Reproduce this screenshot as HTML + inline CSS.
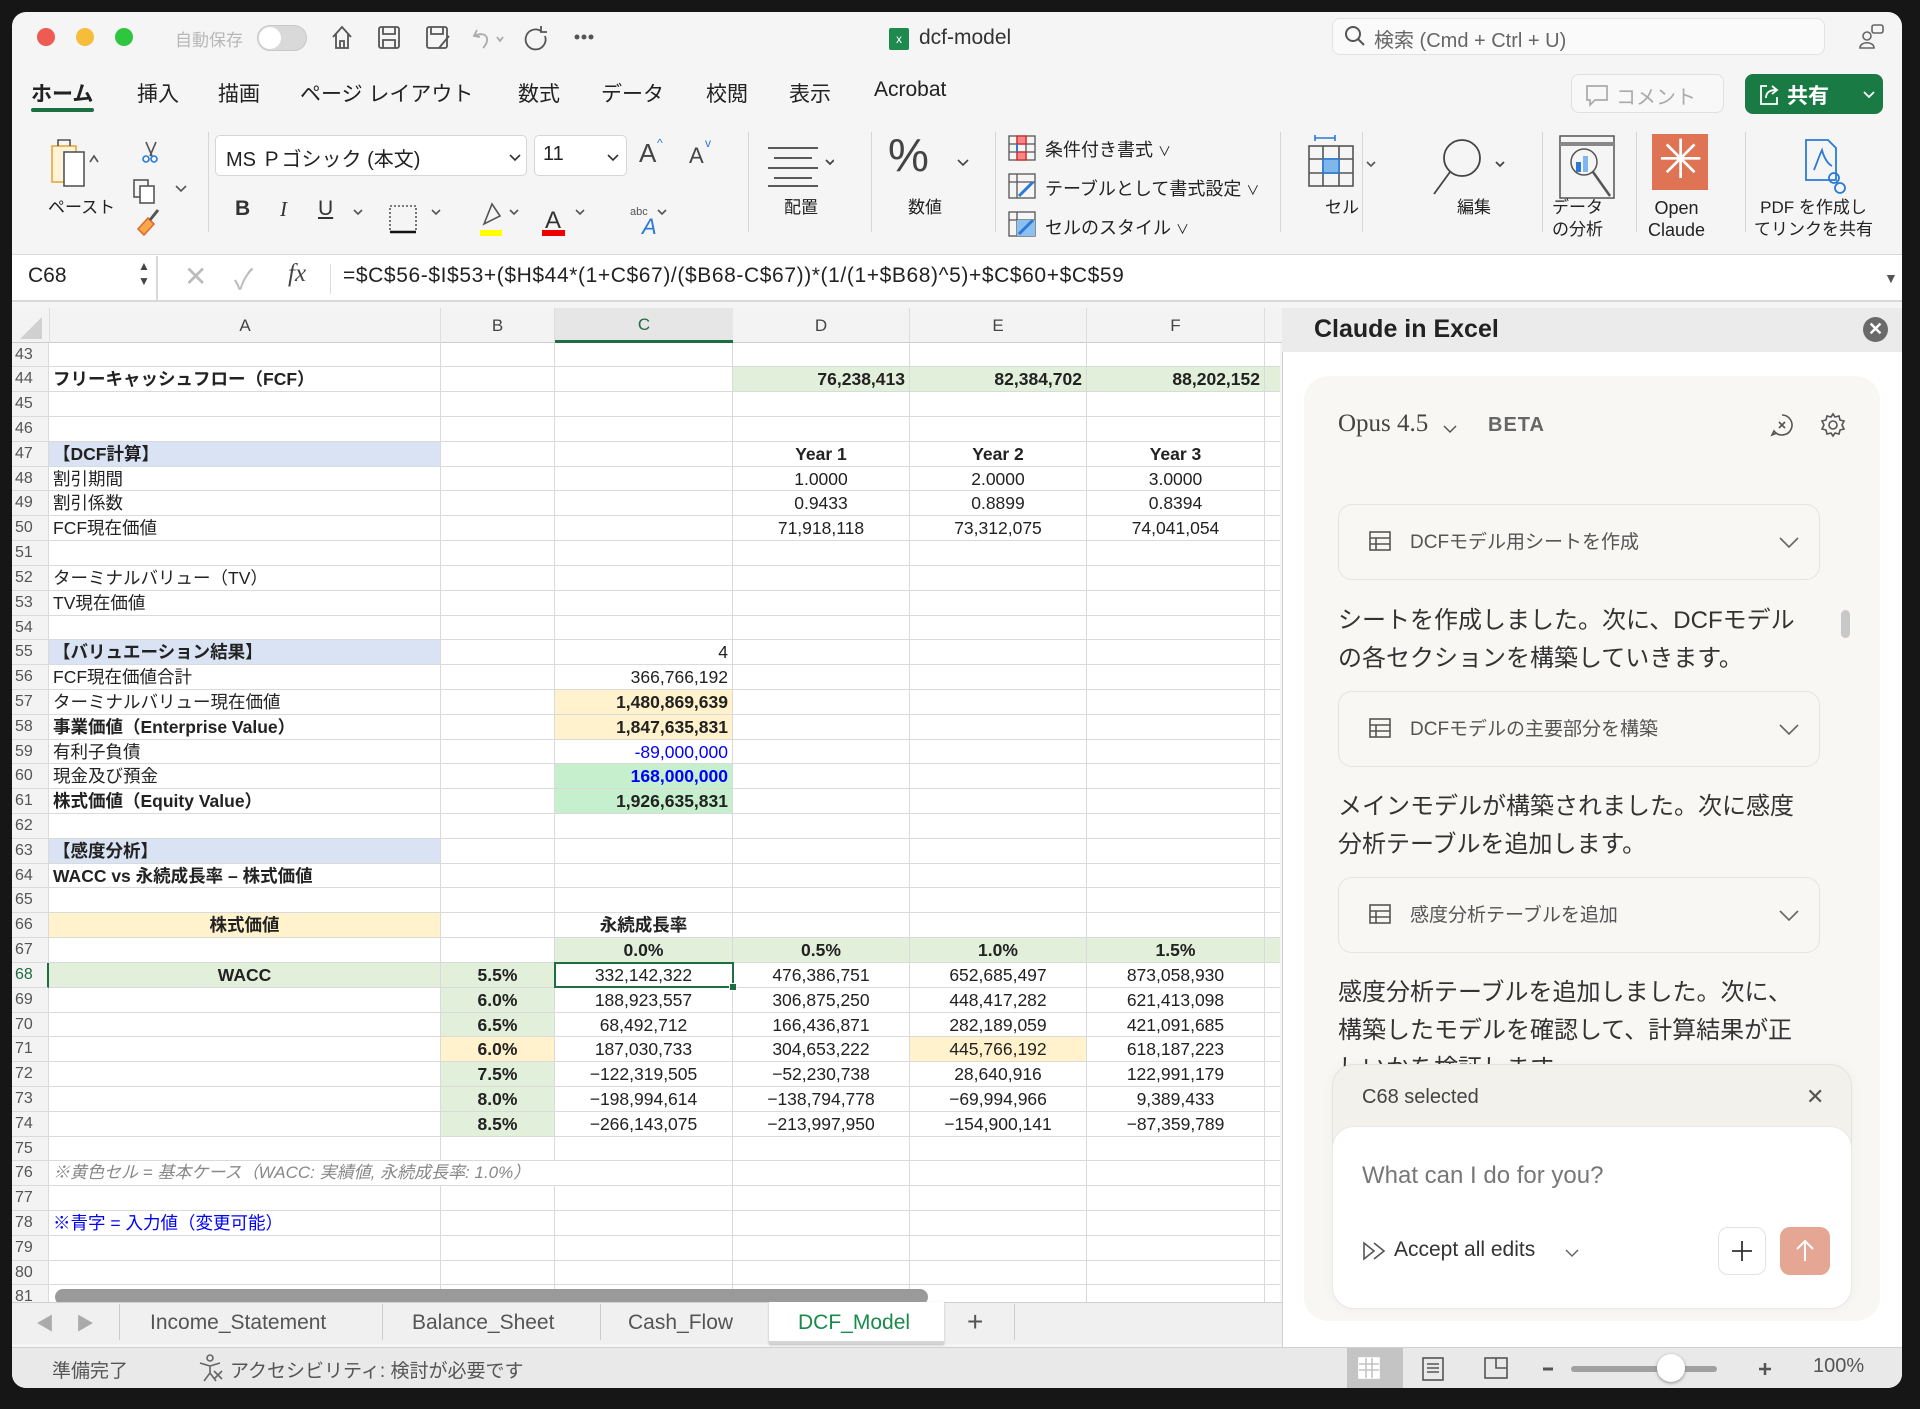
<!DOCTYPE html>
<html><head><meta charset="utf-8">
<style>
*{box-sizing:border-box;margin:0;padding:0}
body{width:1920px;height:1409px;background:#161616;font-family:"Liberation Sans","Noto Sans CJK JP",sans-serif;position:relative;overflow:hidden;color:#222}
.win{position:absolute;left:12px;top:12px;width:1890px;height:1376px;background:#f5f5f5;border-radius:14px;overflow:hidden}
.a{position:absolute}
.t{position:absolute;white-space:nowrap}
.tab{font-size:21px;top:66px;color:#222}
.lbl{font-size:17px;color:#222;text-align:center;line-height:22px}
.vsep{position:absolute;width:1px;background:#d6d6d6;top:128px;height:100px}
#grid{position:absolute;left:0;top:330.6px;width:1268px;height:960px;overflow:hidden;background:#fff}
.r{display:flex;height:24.82px}
.r>div{height:24.82px;border-right:1px solid #dadada;border-bottom:1px solid #dadada;font-size:17.5px;line-height:24px;white-space:nowrap;overflow:hidden;padding:0 4px}
.h{width:37px;flex:none;background:#f3f3f3;color:#555;font-size:16px!important;text-align:left;padding:0 0 0 3px!important}
.A{width:392px;flex:none}.B{width:114px;flex:none}.C{width:178px;flex:none}.D{width:177px;flex:none}.E{width:177px;flex:none}.F{width:178px;flex:none}.G{width:20px;flex:none}
.n{text-align:right}.c{text-align:center}.b{font-weight:bold}
.gr{background:#e2efda}.bl{background:#dae3f3}.ye{background:#fff2cc}.mi{background:#c6efce}
.blue{color:#0000ff}
</style></head><body>
<div class="win">
<!-- title bar -->
<div class="a" style="left:25px;top:16px;width:18px;height:18px;border-radius:50%;background:#ee5b52"></div>
<div class="a" style="left:64px;top:16px;width:18px;height:18px;border-radius:50%;background:#f6bd3b"></div>
<div class="a" style="left:103px;top:16px;width:18px;height:18px;border-radius:50%;background:#2fc63f"></div>
<div class="t" style="left:163px;top:14px;font-size:17px;color:#b8b8b8">自動保存</div>
<div class="a" style="left:245px;top:13px;width:50px;height:26px;border-radius:13px;background:#d9d9d9;border:1px solid #c8c8c8"><div class="a" style="left:1px;top:1px;width:22px;height:22px;border-radius:50%;background:#fff"></div></div>
<svg class="a" style="left:315px;top:10px" width="320" height="30" viewBox="0 0 320 30" fill="none" stroke="#555" stroke-width="1.8">
<path d="M6 15 L15 5 L24 15 M9 12 V26 H21 V12 M13 26 V19 H17 V26"/>
<rect x="52" y="5" width="20" height="21" rx="2"/><path d="M56 5 V12 H68 V5 M56 26 V18 H68 V26"/>
<rect x="100" y="5" width="20" height="21" rx="2"/><path d="M104 5 V12 H116 V5 M112 26 L122 14"/>
<path stroke="#aaa" d="M150 8 L147 14 L153 15 M147 14 C160 8 164 18 156 26"/><path stroke="#aaa" d="M170 15 L173 19 L176 15"/>
<path d="M214 9 A10 10 0 1 0 218 14 M214 4 V10 H220"/>
<circle cx="250" cy="15" r="1.6" fill="#555"/><circle cx="257" cy="15" r="1.6" fill="#555"/><circle cx="264" cy="15" r="1.6" fill="#555"/>
</svg>
<div class="a" style="left:877px;top:16px;width:20px;height:22px;background:#1e8a4e;border-radius:2px;color:#fff;font-size:12px;text-align:center;line-height:22px">x</div>
<div class="t" style="left:907px;top:14px;font-size:21px;color:#333">dcf-model</div>
<div class="a" style="left:1320px;top:6px;width:493px;height:37px;background:#fafafa;border:1px solid #e2e2e2;border-radius:8px"></div>
<svg class="a" style="left:1331px;top:12px" width="24" height="24" fill="none" stroke="#555" stroke-width="2"><circle cx="10" cy="10" r="7"/><path d="M15 15 L21 21"/></svg>
<div class="t" style="left:1362px;top:12px;font-size:20px;color:#666">検索 (Cmd + Ctrl + U)</div>
<svg class="a" style="left:1845px;top:10px" width="30" height="30" fill="none" stroke="#666" stroke-width="1.6"><circle cx="10" cy="14" r="4"/><path d="M3 26 C3 19 17 19 17 26 Z"/><rect x="15" y="3" width="11" height="8" rx="2"/></svg>
<!-- tabs -->
<div class="t tab" style="left:19px;font-weight:bold">ホーム</div>
<div class="a" style="left:19px;top:96px;width:63px;height:4px;border-radius:2px;background:#1e6e43"></div>
<div class="t tab" style="left:125px">挿入</div>
<div class="t tab" style="left:206px">描画</div>
<div class="t tab" style="left:288px">ページ レイアウト</div>
<div class="t tab" style="left:506px">数式</div>
<div class="t tab" style="left:589px">データ</div>
<div class="t tab" style="left:694px">校閲</div>
<div class="t tab" style="left:777px">表示</div>
<div class="t tab" style="left:862px">Acrobat</div>
<div class="a" style="left:1559px;top:62px;width:153px;height:39px;border:1px solid #e0e0e0;border-radius:8px;background:#f8f8f8"></div>
<svg class="a" style="left:1572px;top:70px" width="26" height="26" fill="none" stroke="#aaa" stroke-width="1.7"><path d="M3 4 H23 V18 H11 L6 23 V18 H3 Z"/></svg>
<div class="t" style="left:1604px;top:69px;font-size:20px;color:#aaa">コメント</div>
<div class="a" style="left:1733px;top:62px;width:138px;height:40px;border-radius:8px;background:#1a7a43"></div>
<svg class="a" style="left:1745px;top:70px" width="26" height="26" fill="none" stroke="#fff" stroke-width="1.8"><path d="M10 4 H4 V22 H20 V15 M9 16 C9 10 13 8 19 8 M15 4 L20 8 L15 12"/></svg>
<div class="t" style="left:1775px;top:68px;font-size:21px;color:#fff;font-weight:bold">共有</div>
<svg class="a" style="left:1850px;top:78px" width="14" height="10" fill="none" stroke="#fff" stroke-width="1.8"><path d="M2 2 L7 7 L12 2"/></svg>
<!-- ribbon -->
<svg class="a" style="left:28px;top:122px" width="160" height="110" fill="none" stroke-width="1.6">
<rect x="12" y="12" width="24" height="36" fill="#fff3d8" stroke="#e8a640"/><rect x="24" y="18" width="20" height="34" fill="#fff" stroke="#555"/><path d="M18 12 V6 H30 V12" stroke="#555"/>
<path d="M50 28 L54 22 L58 28" stroke="#555"/>
<path d="M106 8 L112 22 M116 8 L110 22" stroke="#555"/><circle cx="106" cy="25" r="3" stroke="#2a7ad6"/><circle cx="114" cy="25" r="3" stroke="#2a7ad6"/>
<rect x="94" y="46" width="14" height="17" stroke="#555"/><rect x="100" y="52" width="14" height="17" fill="#fff" stroke="#555"/>
<path d="M136 52 L141 57 L146 52" stroke="#555"/>
<path d="M98 95 L108 84 L114 90 L104 101 Z" fill="#f7a84a" stroke="#e06a30"/><path d="M110 86 L118 76" stroke="#555" stroke-width="3"/>
</svg>
<div class="t lbl" style="left:36px;top:185px">ペースト</div>
<div class="vsep" style="left:196px;top:120px"></div>
<div class="a" style="left:203px;top:123px;width:312px;height:41px;background:#fff;border:1px solid #d6d6d6;border-radius:5px"></div>
<div class="t" style="left:214px;top:131px;font-size:20px">MS Ｐゴシック (本文)</div>
<svg class="a" style="left:496px;top:141px" width="14" height="10" fill="none" stroke="#333" stroke-width="1.6"><path d="M2 2 L7 7 L12 2"/></svg>
<div class="a" style="left:522px;top:123px;width:93px;height:41px;background:#fff;border:1px solid #d6d6d6;border-radius:5px"></div>
<div class="t" style="left:531px;top:131px;font-size:20px">11</div>
<svg class="a" style="left:594px;top:141px" width="14" height="10" fill="none" stroke="#333" stroke-width="1.6"><path d="M2 2 L7 7 L12 2"/></svg>
<div class="t" style="left:627px;top:126px;font-size:26px;color:#444">A</div><div class="t" style="left:645px;top:124px;font-size:12px;color:#2a7ad6">^</div>
<div class="t" style="left:677px;top:131px;font-size:22px;color:#444">A</div><div class="t" style="left:693px;top:124px;font-size:12px;color:#2a7ad6">v</div>
<div class="t" style="left:223px;top:185px;font-size:21px;font-weight:bold;color:#333">B</div>
<div class="t" style="left:268px;top:185px;font-size:21px;font-style:italic;font-family:'Liberation Serif';color:#333">I</div>
<div class="t" style="left:306px;top:185px;font-size:21px;text-decoration:underline;color:#333">U</div>
<svg class="a" style="left:340px;top:188px" width="380" height="40" fill="none" stroke="#555" stroke-width="1.6">
<path d="M2 10 L6 14 L10 10"/>
<rect x="38" y="6" width="26" height="26" stroke-dasharray="2 2"/><path d="M38 32 H64" stroke="#111" stroke-width="2.5"/><path d="M80 10 L84 14 L88 10"/>
<path d="M132 24 L140 4 L148 16 Z"/><rect x="128" y="30" width="22" height="6" fill="#ffff00" stroke="none"/><path d="M158 10 L162 14 L166 10"/>
<text x="193" y="28" font-size="24" fill="#333" stroke="none" font-family="Liberation Sans">A</text><rect x="190" y="30" width="23" height="6" fill="#ee0000" stroke="none"/><path d="M224 10 L228 14 L232 10"/>
<text x="278" y="15" font-size="11" fill="#555" stroke="none" font-family="Liberation Sans">abc</text><text x="290" y="34" font-size="22" fill="#2a7ad6" stroke="none" font-style="italic" font-family="Liberation Sans">A</text><path d="M306 10 L310 14 L314 10"/>
</svg>
<div class="vsep" style="left:736px;top:120px"></div>
<svg class="a" style="left:752px;top:130px" width="70" height="50" fill="none" stroke="#444" stroke-width="1.8"><path d="M4 6 H54 M10 16 H48 M4 26 H54 M10 36 H48 M4 44 H54"/><path d="M62 18 L66 22 L70 18"/></svg>
<div class="t lbl" style="left:772px;top:185px">配置</div>
<div class="vsep" style="left:859px;top:120px"></div>
<div class="t" style="left:876px;top:116px;font-size:46px;color:#444;font-weight:300">%</div>
<svg class="a" style="left:944px;top:146px" width="14" height="10" fill="none" stroke="#444" stroke-width="1.6"><path d="M2 2 L7 7 L12 2"/></svg>
<div class="t lbl" style="left:896px;top:185px">数値</div>
<div class="vsep" style="left:983px;top:120px"></div>
<svg class="a" style="left:995px;top:122px" width="30" height="110" fill="none" stroke="#555" stroke-width="1.3">
<rect x="2" y="2" width="26" height="24"/><path d="M2 10 H28 M2 18 H28 M10 2 V26 M19 2 V26"/><rect x="10" y="2" width="9" height="8" fill="#f08a8a" stroke="#e02020"/><rect x="10" y="18" width="9" height="8" fill="#f08a8a" stroke="#e02020"/><path d="M10 10 V18" stroke="#2a7ad6" stroke-width="2"/>
<rect x="2" y="40" width="26" height="24"/><path d="M2 48 H28 M10 40 V64"/><path d="M12 62 L26 48" stroke="#2a7ad6" stroke-width="3"/>
<rect x="2" y="78" width="26" height="24"/><path d="M2 86 H28 M10 78 V102"/><rect x="10" y="86" width="18" height="16" fill="#8cc0f0" stroke="none"/><path d="M12 100 L26 86" stroke="#2a7ad6" stroke-width="3"/>
</svg>
<div class="t" style="left:1033px;top:124px;font-size:18px;color:#222">条件付き書式 <span style="font-size:13px">∨</span></div>
<div class="t" style="left:1033px;top:163px;font-size:18px;color:#222">テーブルとして書式設定 <span style="font-size:13px">∨</span></div>
<div class="t" style="left:1033px;top:202px;font-size:18px;color:#222">セルのスタイル <span style="font-size:13px">∨</span></div>
<div class="vsep" style="left:1268px;top:120px"></div>
<svg class="a" style="left:1293px;top:120px" width="80" height="60" fill="none" stroke="#555" stroke-width="1.6">
<path d="M10 6 H30 M10 3 V9 M30 3 V9" stroke="#2a7ad6"/><rect x="4" y="14" width="44" height="40"/><path d="M4 27 H48 M4 41 H48 M18 14 V54 M34 14 V54"/><rect x="18" y="27" width="16" height="14" fill="#7db7ec" stroke="#2a7ad6"/><path d="M62 30 L66 34 L70 30"/>
</svg>
<div class="t lbl" style="left:1313px;top:185px">セル</div>
<div class="vsep" style="left:1350px;top:120px"></div>
<svg class="a" style="left:1416px;top:122px" width="80" height="70" fill="none" stroke="#444" stroke-width="1.8"><circle cx="34" cy="24" r="18"/><path d="M22 38 L6 60"/><path d="M68 28 L72 32 L76 28"/></svg>
<div class="t lbl" style="left:1445px;top:185px">編集</div>
<div class="vsep" style="left:1530px;top:120px"></div>
<svg class="a" style="left:1546px;top:122px" width="58" height="68" fill="none" stroke="#555" stroke-width="1.5"><rect x="2" y="2" width="54" height="62"/><path d="M2 10 H56" stroke-width="4" stroke="#888"/><circle cx="26" cy="28" r="13"/><path d="M35 38 L52 62" stroke-width="2.5"/><rect x="18" y="28" width="5" height="10" fill="#2a7ad6" stroke="none"/><rect x="25" y="22" width="5" height="16" fill="#7db7ec" stroke="none"/></svg>
<div class="t lbl" style="left:1540px;top:185px">データ<br>の分析</div>
<div class="vsep" style="left:1624px;top:120px"></div>
<div class="a" style="left:1640px;top:122px;width:56px;height:56px;background:#de7454"></div>
<div class="t" style="left:1646px;top:118px;font-size:54px;color:#fff;line-height:60px">✳</div>
<div class="t lbl" style="left:1636px;top:185px;font-size:18px">Open<br>Claude</div>
<div class="vsep" style="left:1733px;top:120px"></div>
<svg class="a" style="left:1788px;top:124px" width="50" height="60" fill="none" stroke="#2a7ad6" stroke-width="1.8"><path d="M6 4 H28 L36 12 V44 H6 Z"/><path d="M14 34 C18 24 20 18 22 14 C24 22 28 28 32 30"/><circle cx="34" cy="42" r="5"/><circle cx="40" cy="52" r="5"/></svg>
<div class="t lbl" style="left:1742px;top:185px">PDF を作成し<br>てリンクを共有</div>
<!-- formula bar -->
<div class="a" style="left:0;top:242px;width:1890px;height:48px;background:#fff;border-top:1px solid #d8d8d8;border-bottom:2px solid #d8d8d8"></div>
<div class="a" style="left:0;top:244px;width:146px;height:44px;border-right:2px solid #d8d8d8"></div>
<div class="t" style="left:16px;top:252px;font-size:21px">C68</div>
<div class="t" style="left:126px;top:247px;font-size:12px;color:#444;line-height:15px">▲<br>▼</div>
<div class="t" style="left:172px;top:248px;font-size:28px;color:#bbb">✕</div>
<div class="t" style="left:222px;top:246px;font-size:28px;color:#bbb">✓</div>
<div class="t" style="left:276px;top:248px;font-size:25px;font-style:italic;font-family:'Liberation Serif';color:#444">fx</div>
<div class="a" style="left:318px;top:252px;width:1px;height:30px;background:#ddd"></div>
<div class="t" style="left:331px;top:252px;font-size:21px;letter-spacing:0.6px">=$C$56-$I$53+($H$44*(1+C$67)/($B68-C$67))*(1/(1+$B68)^5)+$C$60+$C$59</div>
<div class="t" style="left:1872px;top:258px;font-size:14px;color:#555">▼</div>
<!-- column header -->
<div class="a" style="left:0;top:296px;width:1270px;height:35px;background:#f3f3f3;border-bottom:1px solid #ccc"></div>
<svg class="a" style="left:6px;top:303px" width="28" height="26"><path d="M24 2 V24 H2 Z" fill="#d0d0d0"/></svg>
<div class="a" style="left:37px;top:296px;width:392px;height:35px;border-left:1px solid #ddd;border-right:1px solid #ddd;text-align:center;font-size:17px;line-height:35px;color:#444">A</div>
<div class="a" style="left:429px;top:296px;width:114px;height:35px;border-right:1px solid #ddd;text-align:center;font-size:17px;line-height:35px;color:#444">B</div>
<div class="a" style="left:543px;top:296px;width:178px;height:35px;background:#e6e6e6;border-bottom:3px solid #1e6e43;text-align:center;font-size:17px;line-height:33px;color:#1e6e43">C</div>
<div class="a" style="left:721px;top:296px;width:177px;height:35px;border-right:1px solid #ddd;text-align:center;font-size:17px;line-height:35px;color:#444">D</div>
<div class="a" style="left:898px;top:296px;width:177px;height:35px;border-right:1px solid #ddd;text-align:center;font-size:17px;line-height:35px;color:#444">E</div>
<div class="a" style="left:1075px;top:296px;width:178px;height:35px;border-right:1px solid #ddd;text-align:center;font-size:17px;line-height:35px;color:#444">F</div>
<!-- grid -->
<div id="grid">
<div class="r"><div class="h">43</div><div class="A"></div><div class="B"></div><div class="C"></div><div class="D"></div><div class="E"></div><div class="F"></div><div class="G"></div></div>
<div class="r"><div class="h">44</div><div class="A b">フリーキャッシュフロー（FCF）</div><div class="B"></div><div class="C"></div><div class="D gr n b">76,238,413</div><div class="E gr n b">82,384,702</div><div class="F gr n b">88,202,152</div><div class="G gr"></div></div>
<div class="r"><div class="h">45</div><div class="A"></div><div class="B"></div><div class="C"></div><div class="D"></div><div class="E"></div><div class="F"></div><div class="G"></div></div>
<div class="r"><div class="h">46</div><div class="A"></div><div class="B"></div><div class="C"></div><div class="D"></div><div class="E"></div><div class="F"></div><div class="G"></div></div>
<div class="r"><div class="h">47</div><div class="A bl b">【DCF計算】</div><div class="B"></div><div class="C"></div><div class="D c b">Year 1</div><div class="E c b">Year 2</div><div class="F c b">Year 3</div><div class="G"></div></div>
<div class="r"><div class="h">48</div><div class="A">割引期間</div><div class="B"></div><div class="C"></div><div class="D c">1.0000</div><div class="E c">2.0000</div><div class="F c">3.0000</div><div class="G"></div></div>
<div class="r"><div class="h">49</div><div class="A">割引係数</div><div class="B"></div><div class="C"></div><div class="D c">0.9433</div><div class="E c">0.8899</div><div class="F c">0.8394</div><div class="G"></div></div>
<div class="r"><div class="h">50</div><div class="A">FCF現在価値</div><div class="B"></div><div class="C"></div><div class="D c">71,918,118</div><div class="E c">73,312,075</div><div class="F c">74,041,054</div><div class="G"></div></div>
<div class="r"><div class="h">51</div><div class="A"></div><div class="B"></div><div class="C"></div><div class="D"></div><div class="E"></div><div class="F"></div><div class="G"></div></div>
<div class="r"><div class="h">52</div><div class="A">ターミナルバリュー（TV）</div><div class="B"></div><div class="C"></div><div class="D"></div><div class="E"></div><div class="F"></div><div class="G"></div></div>
<div class="r"><div class="h">53</div><div class="A">TV現在価値</div><div class="B"></div><div class="C"></div><div class="D"></div><div class="E"></div><div class="F"></div><div class="G"></div></div>
<div class="r"><div class="h">54</div><div class="A"></div><div class="B"></div><div class="C"></div><div class="D"></div><div class="E"></div><div class="F"></div><div class="G"></div></div>
<div class="r"><div class="h">55</div><div class="A bl b">【バリュエーション結果】</div><div class="B"></div><div class="C n">4</div><div class="D"></div><div class="E"></div><div class="F"></div><div class="G"></div></div>
<div class="r"><div class="h">56</div><div class="A">FCF現在価値合計</div><div class="B"></div><div class="C n">366,766,192</div><div class="D"></div><div class="E"></div><div class="F"></div><div class="G"></div></div>
<div class="r"><div class="h">57</div><div class="A">ターミナルバリュー現在価値</div><div class="B"></div><div class="C n b ye">1,480,869,639</div><div class="D"></div><div class="E"></div><div class="F"></div><div class="G"></div></div>
<div class="r"><div class="h">58</div><div class="A b">事業価値（Enterprise Value）</div><div class="B"></div><div class="C n b ye">1,847,635,831</div><div class="D"></div><div class="E"></div><div class="F"></div><div class="G"></div></div>
<div class="r"><div class="h">59</div><div class="A">有利子負債</div><div class="B"></div><div class="C n blue">-89,000,000</div><div class="D"></div><div class="E"></div><div class="F"></div><div class="G"></div></div>
<div class="r"><div class="h">60</div><div class="A">現金及び預金</div><div class="B"></div><div class="C n b mi blue">168,000,000</div><div class="D"></div><div class="E"></div><div class="F"></div><div class="G"></div></div>
<div class="r"><div class="h">61</div><div class="A b">株式価値（Equity Value）</div><div class="B"></div><div class="C n b mi">1,926,635,831</div><div class="D"></div><div class="E"></div><div class="F"></div><div class="G"></div></div>
<div class="r"><div class="h">62</div><div class="A"></div><div class="B"></div><div class="C"></div><div class="D"></div><div class="E"></div><div class="F"></div><div class="G"></div></div>
<div class="r"><div class="h">63</div><div class="A bl b">【感度分析】</div><div class="B"></div><div class="C"></div><div class="D"></div><div class="E"></div><div class="F"></div><div class="G"></div></div>
<div class="r"><div class="h">64</div><div class="A b">WACC vs 永続成長率 – 株式価値</div><div class="B"></div><div class="C"></div><div class="D"></div><div class="E"></div><div class="F"></div><div class="G"></div></div>
<div class="r"><div class="h">65</div><div class="A"></div><div class="B"></div><div class="C"></div><div class="D"></div><div class="E"></div><div class="F"></div><div class="G"></div></div>
<div class="r"><div class="h">66</div><div class="A ye c b">株式価値</div><div class="B"></div><div class="C c b">永続成長率</div><div class="D"></div><div class="E"></div><div class="F"></div><div class="G"></div></div>
<div class="r"><div class="h">67</div><div class="A"></div><div class="B"></div><div class="C gr c b">0.0%</div><div class="D gr c b">0.5%</div><div class="E gr c b">1.0%</div><div class="F gr c b">1.5%</div><div class="G gr"></div></div>
<div class="r"><div class="h" style="color:#1e6e43;border-right:2px solid #1e6e43">68</div><div class="A gr c b">WACC</div><div class="B gr c b">5.5%</div><div class="C c">332,142,322</div><div class="D c">476,386,751</div><div class="E c">652,685,497</div><div class="F c">873,058,930</div><div class="G"></div></div>
<div class="r"><div class="h">69</div><div class="A"></div><div class="B gr c b">6.0%</div><div class="C c">188,923,557</div><div class="D c">306,875,250</div><div class="E c">448,417,282</div><div class="F c">621,413,098</div><div class="G"></div></div>
<div class="r"><div class="h">70</div><div class="A"></div><div class="B gr c b">6.5%</div><div class="C c">68,492,712</div><div class="D c">166,436,871</div><div class="E c">282,189,059</div><div class="F c">421,091,685</div><div class="G"></div></div>
<div class="r"><div class="h">71</div><div class="A"></div><div class="B ye c b">6.0%</div><div class="C c">187,030,733</div><div class="D c">304,653,222</div><div class="E c ye">445,766,192</div><div class="F c">618,187,223</div><div class="G"></div></div>
<div class="r"><div class="h">72</div><div class="A"></div><div class="B gr c b">7.5%</div><div class="C c">−122,319,505</div><div class="D c">−52,230,738</div><div class="E c">28,640,916</div><div class="F c">122,991,179</div><div class="G"></div></div>
<div class="r"><div class="h">73</div><div class="A"></div><div class="B gr c b">8.0%</div><div class="C c">−198,994,614</div><div class="D c">−138,794,778</div><div class="E c">−69,994,966</div><div class="F c">9,389,433</div><div class="G"></div></div>
<div class="r"><div class="h">74</div><div class="A"></div><div class="B gr c b">8.5%</div><div class="C c">−266,143,075</div><div class="D c">−213,997,950</div><div class="E c">−154,900,141</div><div class="F c">−87,359,789</div><div class="G"></div></div>
<div class="r"><div class="h">75</div><div class="A"></div><div class="B"></div><div class="C"></div><div class="D"></div><div class="E"></div><div class="F"></div><div class="G"></div></div>
<div class="r"><div class="h">76</div><div class="A" style="overflow:visible;border-right:none;color:#888;font-style:italic;position:relative;z-index:2;font-size:17px">※黄色セル = 基本ケース（WACC: 実績値, 永続成長率: 1.0%）</div><div class="B" style="border-right:none"></div><div class="C"></div><div class="D"></div><div class="E"></div><div class="F"></div><div class="G"></div></div>
<div class="r"><div class="h">77</div><div class="A"></div><div class="B"></div><div class="C"></div><div class="D"></div><div class="E"></div><div class="F"></div><div class="G"></div></div>
<div class="r"><div class="h">78</div><div class="A blue">※青字 = 入力値（変更可能）</div><div class="B"></div><div class="C"></div><div class="D"></div><div class="E"></div><div class="F"></div><div class="G"></div></div>
<div class="r"><div class="h">79</div><div class="A"></div><div class="B"></div><div class="C"></div><div class="D"></div><div class="E"></div><div class="F"></div><div class="G"></div></div>
<div class="r"><div class="h">80</div><div class="A"></div><div class="B"></div><div class="C"></div><div class="D"></div><div class="E"></div><div class="F"></div><div class="G"></div></div>
<div class="r"><div class="h">81</div><div class="A"></div><div class="B"></div><div class="C"></div><div class="D"></div><div class="E"></div><div class="F"></div><div class="G"></div></div>
</div>
<!-- selection -->
<div class="a" style="left:542px;top:950px;width:180px;height:26px;border:2.5px solid #1e6e43"></div>
<div class="a" style="left:717px;top:971px;width:8px;height:8px;background:#1e6e43;border:1px solid #fff"></div>
<!-- h scrollbar -->
<div class="a" style="left:43px;top:1277px;width:873px;height:16px;border-radius:8px;background:#9a9a9a"></div>
<!-- sheet tabs -->
<div class="a" style="left:0;top:1290px;width:1270px;height:42px;background:#f0f0f0;border-top:1px solid #d0d0d0"></div>
<div class="t" style="left:24px;top:1298px;font-size:18px;color:#aaa">◀</div>
<div class="t" style="left:64px;top:1298px;font-size:18px;color:#aaa">▶</div>
<div class="a" style="left:107px;top:1292px;width:1px;height:36px;background:#ccc"></div>
<div class="t" style="left:138px;top:1299px;font-size:21px;color:#555">Income_Statement</div>
<div class="a" style="left:370px;top:1292px;width:1px;height:36px;background:#ccc"></div>
<div class="t" style="left:400px;top:1299px;font-size:21px;color:#555">Balance_Sheet</div>
<div class="a" style="left:588px;top:1292px;width:1px;height:36px;background:#ccc"></div>
<div class="t" style="left:616px;top:1299px;font-size:21px;color:#555">Cash_Flow</div>
<div class="a" style="left:757px;top:1290px;width:175px;height:42px;background:#fff;border-bottom:3px solid #d4d4d4;box-shadow:0 1px 2px #bbb"></div>
<div class="t" style="left:786px;top:1299px;font-size:21px;color:#1a8a4a">DCF_Model</div>
<div class="t" style="left:955px;top:1294px;font-size:28px;color:#555">+</div>
<div class="a" style="left:1002px;top:1292px;width:1px;height:36px;background:#ccc"></div>
<!-- status bar -->
<div class="a" style="left:0;top:1335px;width:1890px;height:41px;background:#e9e9e9;border-top:1px solid #d0d0d0"></div>
<div class="t" style="left:40px;top:1344px;font-size:19px;color:#555">準備完了</div>
<svg class="a" style="left:184px;top:1341px" width="28" height="30" fill="none" stroke="#666" stroke-width="1.6"><circle cx="14" cy="5" r="3"/><path d="M4 10 L14 13 L24 10 M14 13 V20 L8 28 M14 20 L20 28 M18 18 L26 26 M26 18 L18 26"/></svg>
<div class="t" style="left:218px;top:1344px;font-size:19px;color:#555">アクセシビリティ: 検討が必要です</div>
<div class="a" style="left:1335px;top:1336px;width:56px;height:40px;background:#c4c4c4"></div>
<svg class="a" style="left:1345px;top:1342px" width="420" height="30" fill="none" stroke="#555" stroke-width="1.6">
<rect x="2" y="4" width="20" height="20" fill="#fff" stroke="#fff"/><path d="M2 10 H22 M2 16 H22 M9 4 V24 M15 4 V24" stroke="#c4c4c4"/>
<rect x="66" y="4" width="20" height="22"/><path d="M70 10 H82 M70 14 H82 M70 18 H82"/>
<rect x="128" y="4" width="22" height="20"/><path d="M139 4 V14 H150"/>
<path d="M186 15 H196" stroke-width="3"/>
<rect x="214" y="12" width="146" height="6" rx="3" fill="#a0a0a0" stroke="none"/>
<path d="M402 15 H414 M408 9 V21" stroke-width="2.5"/>
</svg>
<div class="a" style="left:1645px;top:1342px;width:28px;height:28px;border-radius:50%;background:#fff;box-shadow:0 1px 3px #888"></div>
<div class="t" style="left:1801px;top:1343px;font-size:20px;color:#555">100%</div>
<!-- Claude panel -->
<div class="a" style="left:1270px;top:296px;width:620px;height:1039px;background:#fff;border-left:1px solid #d0d0d0"></div>
<div class="a" style="left:1270px;top:296px;width:620px;height:44px;background:#ebebeb"></div>
<div class="t" style="left:1302px;top:303px;font-size:25px;color:#222;font-weight:600">Claude in Excel</div>
<div class="a" style="left:1851px;top:305px;width:25px;height:25px;border-radius:50%;background:#6a6a6a;color:#fff;text-align:center;font-size:18px;line-height:25px;font-weight:bold">✕</div>
<div class="a" style="left:1292px;top:364px;width:576px;height:945px;background:#f8f7f4;border-radius:24px"></div>
<div class="t" style="left:1326px;top:398px;font-size:25px;color:#444;font-family:'Liberation Serif',serif">Opus 4.5</div>
<svg class="a" style="left:1430px;top:412px" width="16" height="10" fill="none" stroke="#555" stroke-width="1.5"><path d="M2 2 L8 8 L14 2"/></svg>
<div class="t" style="left:1476px;top:402px;font-size:20px;color:#666;font-weight:bold;letter-spacing:1px">BETA</div>
<svg class="a" style="left:1757px;top:400px" width="26" height="26" fill="none" stroke="#555" stroke-width="1.6"><path d="M13 3 A10 10 0 1 1 5 19 L3 23 L8 21"/><path d="M10 10 L16 16 M16 10 L10 16"/></svg>
<svg class="a" style="left:1808px;top:400px" width="26" height="26" fill="none" stroke="#555" stroke-width="1.6"><circle cx="13" cy="13" r="4"/><path d="M13 2 L15 5 L19 4 L20 8 L24 9 L22 13 L24 17 L20 18 L19 22 L15 21 L13 24 L11 21 L7 22 L6 18 L2 17 L4 13 L2 9 L6 8 L7 4 L11 5 Z"/></svg>
<div class="a" style="left:1829px;top:598px;width:9px;height:28px;border-radius:5px;background:#c8c8c8"></div>
<!-- cards -->
<div class="a" style="left:1326px;top:492px;width:482px;height:76px;border:1px solid #e6e4de;border-radius:14px;background:#f8f7f4"></div>
<svg class="a" style="left:1356px;top:518px" width="26" height="22" fill="none" stroke="#555" stroke-width="1.6"><rect x="2" y="2" width="20" height="18"/><path d="M2 8 H22 M2 14 H22 M8 8 V20"/></svg>
<div class="t" style="left:1398px;top:515px;font-size:19px;color:#555">DCFモデル用シートを作成</div>
<svg class="a" style="left:1766px;top:524px" width="22" height="14" fill="none" stroke="#666" stroke-width="1.6"><path d="M2 2 L11 11 L20 2"/></svg>
<div class="t" style="left:1326px;top:590px;font-size:24px;color:#333;line-height:38px">シートを作成しました。次に、DCFモデル<br>の各セクションを構築していきます。</div>
<div class="a" style="left:1326px;top:679px;width:482px;height:76px;border:1px solid #e6e4de;border-radius:14px;background:#f8f7f4"></div>
<svg class="a" style="left:1356px;top:705px" width="26" height="22" fill="none" stroke="#555" stroke-width="1.6"><rect x="2" y="2" width="20" height="18"/><path d="M2 8 H22 M2 14 H22 M8 8 V20"/></svg>
<div class="t" style="left:1398px;top:702px;font-size:19px;color:#555">DCFモデルの主要部分を構築</div>
<svg class="a" style="left:1766px;top:711px" width="22" height="14" fill="none" stroke="#666" stroke-width="1.6"><path d="M2 2 L11 11 L20 2"/></svg>
<div class="t" style="left:1326px;top:776px;font-size:24px;color:#333;line-height:38px">メインモデルが構築されました。次に感度<br>分析テーブルを追加します。</div>
<div class="a" style="left:1326px;top:865px;width:482px;height:76px;border:1px solid #e6e4de;border-radius:14px;background:#f8f7f4"></div>
<svg class="a" style="left:1356px;top:891px" width="26" height="22" fill="none" stroke="#555" stroke-width="1.6"><rect x="2" y="2" width="20" height="18"/><path d="M2 8 H22 M2 14 H22 M8 8 V20"/></svg>
<div class="t" style="left:1398px;top:888px;font-size:19px;color:#555">感度分析テーブルを追加</div>
<svg class="a" style="left:1766px;top:897px" width="22" height="14" fill="none" stroke="#666" stroke-width="1.6"><path d="M2 2 L11 11 L20 2"/></svg>
<div class="t" style="left:1326px;top:962px;font-size:24px;color:#333;line-height:38px">感度分析テーブルを追加しました。次に、<br>構築したモデルを確認して、計算結果が正<br>しいかを検証します。</div>
<!-- input -->
<div class="a" style="left:1320px;top:1052px;width:520px;height:245px;background:#f2f1ec;border:1px solid #e4e2dc;border-radius:22px;box-shadow:0 0 12px rgba(0,0,0,0.04)"></div>
<div class="t" style="left:1350px;top:1074px;font-size:20px;color:#444">C68 selected</div>
<div class="t" style="left:1794px;top:1072px;font-size:22px;color:#555">✕</div>
<div class="a" style="left:1320px;top:1114px;width:520px;height:183px;background:#fff;border:1px solid #ebe9e4;border-radius:22px"></div>
<div class="t" style="left:1350px;top:1150px;font-size:24px;color:#777">What can I do for you?</div>
<svg class="a" style="left:1350px;top:1228px" width="28" height="22" fill="none" stroke="#555" stroke-width="1.6"><path d="M2 3 L12 11 L2 19 Z M12 3 L22 11 L12 19"/></svg>
<div class="t" style="left:1382px;top:1226px;font-size:21px;color:#333">Accept all edits</div>
<svg class="a" style="left:1552px;top:1236px" width="16" height="10" fill="none" stroke="#666" stroke-width="1.5"><path d="M2 2 L8 8 L14 2"/></svg>
<div class="a" style="left:1706px;top:1215px;width:48px;height:48px;border:1px solid #e3e3e3;border-radius:10px;background:#fff"></div>
<svg class="a" style="left:1718px;top:1227px" width="24" height="24" stroke="#333" stroke-width="1.8"><path d="M12 2 V22 M2 12 H22"/></svg>
<div class="a" style="left:1768px;top:1215px;width:50px;height:48px;border-radius:10px;background:#e5a693"></div>
<svg class="a" style="left:1781px;top:1225px" width="24" height="28" fill="none" stroke="#fff" stroke-width="2"><path d="M12 24 V4 M4 12 L12 4 L20 12"/></svg>
</div>
</body></html>
